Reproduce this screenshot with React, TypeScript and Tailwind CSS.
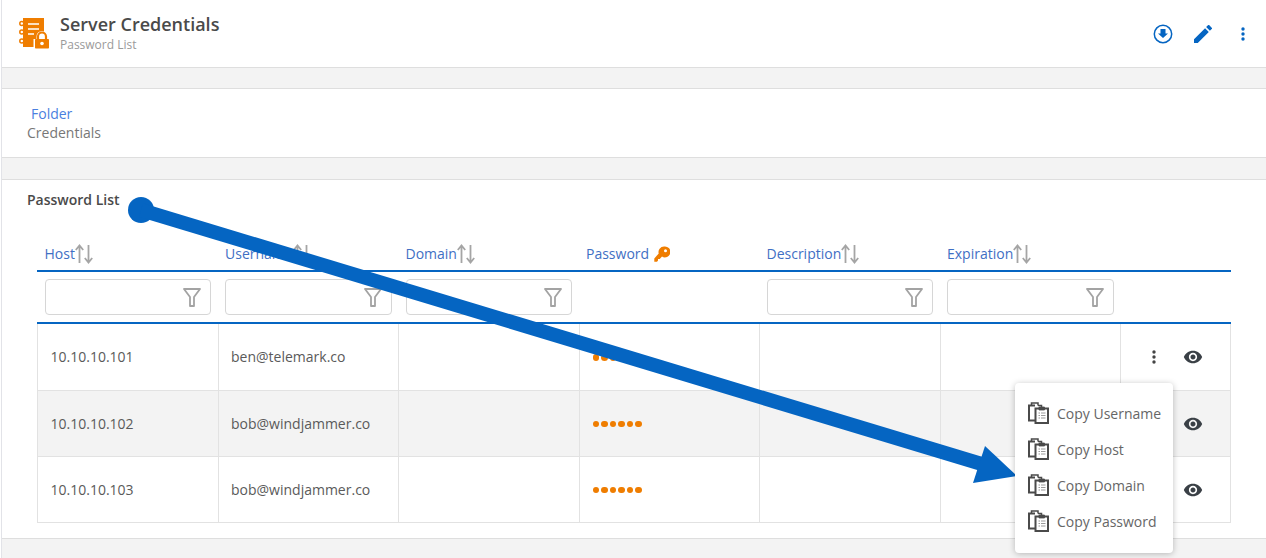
import type { ReactNode } from "react";

const rows = [
  { host: "10.10.10.101", user: "ben@telemark.co" },
  { host: "10.10.10.102", user: "bob@windjammer.co" },
  { host: "10.10.10.103", user: "bob@windjammer.co" },
];

const menuItems = ["Copy Username", "Copy Host", "Copy Domain", "Copy Password"];

const SortArrows = () => (
  <svg width="19" height="20" viewBox="0 0 19 20" fill="none" stroke="#a5a5a5" strokeWidth="1.8" className="shrink-0">
    <path d="M4.500 19V2M0.800 6l3.700-4.500 3.700 4.500" />
    <path d="M13.500 1v17M9.800 14l3.700 4.500 3.700-4.500" />
  </svg>
);

const FunnelIcon = () => (
  <svg width="18" height="19" viewBox="0 0 18 19" fill="none" stroke="#a3a3a3" strokeWidth="1.8" className="shrink-0">
    <path d="M1 1h16l-6 8v9H7V9z" strokeLinejoin="round" />
  </svg>
);

const ClipboardIcon = () => (
  <svg width="21" height="22" viewBox="0 0 21 22" fill="none" stroke="#4a4a4a" className="shrink-0">
    <path d="M7 3.500H1v15h6" strokeWidth="2" />
    <path d="M3.500 3.500V1h6.500v2.500M10 3.500h3.500v3" strokeWidth="1.500" />
    <path d="M7.500 6.500h12.500v14.500H7.500z" fill="#ffffff" strokeWidth="2" />
    <path d="M11 5h5.500v3H11z" fill="#4a4a4a" strokeWidth="0.800" />
    <path d="M10.500 11h1.500M13 11h4.500M10.500 13.500h1.500M13 13.500h4.500M10.500 16h1.500M13 16h4.500" stroke="#9a9a9a" strokeWidth="1" />
  </svg>
);

const EyeIcon = () => (
  <svg width="20" height="20" viewBox="0 0 24 24" fill="#3a4046">
    <path d="M12 4.500C7 4.500 2.730 7.610 1 12c1.730 4.390 6 7.500 11 7.500s9.270-3.110 11-7.500c-1.730-4.390-6-7.500-11-7.500zM12 17c-2.760 0-5-2.240-5-5s2.240-5 5-5 5 2.240 5 5-2.240 5-5 5zm0-8c-1.660 0-3 1.340-3 3s1.340 3 3 3 3-1.340 3-3-1.340-3-3-3z" />
  </svg>
);

const DotsIcon = ({ color }: { color: string }) => (
  <svg width="4" height="14" viewBox="0 0 4 14" fill={color}>
    <circle cx="2" cy="2" r="1.700" />
    <circle cx="2" cy="7" r="1.700" />
    <circle cx="2" cy="12" r="1.700" />
  </svg>
);

const PasswordDots = () => (
  <div className="flex gap-[2px]">
    {[0, 1, 2, 3, 4, 5].map((i) => (
      <span key={i} className="w-[6.500px] h-[6.500px] rounded-full bg-[#ef7d00]" />
    ))}
  </div>
);

const HeaderCell = ({ label, sort = true, extra }: { label: string; sort?: boolean; extra?: ReactNode }) => (
  <div className="flex items-center pl-[7.500px] text-[14px] text-[#3f6fc4]">
    <span>{label}</span>
    {sort && <SortArrows />}
    {extra}
  </div>
);

const FilterBox = () => (
  <div className="flex items-center justify-end w-[166.500px] h-[36px] pr-[9px] bg-white border border-[#d6d6d6] rounded-[4px]">
    <FunnelIcon />
  </div>
);

const App = () => {
  const grid = "grid grid-cols-[180.500px_180.500px_180.500px_180.500px_180.500px_180.500px_minmax(0,1fr)]";

  return (
    <div
      className="relative w-[1266px] h-[558px] overflow-hidden bg-white pl-[1px] text-[14px] text-[#4a4a4a]"
      style={{ fontFamily: '"Open Sans", sans-serif' }}
    >
      <div className="flex flex-col h-full border-l border-[#e2e3e8] bg-[#f3f3f3]">
        {/* page header */}
        <header className="flex items-center justify-between h-[68px] shrink-0 bg-white border-b border-[#dedede] pl-[17px] pr-[21px]">
          <div className="flex items-center gap-[11px]">
            <svg width="30" height="31" viewBox="0 0 30 31" className="shrink-0">
              <path d="M4 0h21v29H4z" fill="#ef7d00" />
              <g fill="#ffffff" stroke="#ef7d00" strokeWidth="1.500">
                <circle cx="2.800" cy="5.500" r="2" />
                <circle cx="2.800" cy="14" r="2" />
                <circle cx="2.800" cy="23" r="2" />
              </g>
              <path d="M9 6h11M9 11h11M9 16h6" stroke="#ffffff" strokeWidth="1.600" />
              <path d="M14.500 31V21h3v-2.500a5.500 5.500 0 0 1 11 0V21h1.500v10z" fill="#ffffff" />
              <path d="M19 21.500v-3a4 4 0 0 1 8 0v3" fill="none" stroke="#ef7d00" strokeWidth="2.200" />
              <rect x="16" y="21" width="14" height="9.500" rx="0.800" fill="#ef7d00" />
              <circle cx="23" cy="25.500" r="1.800" fill="#ffffff" />
            </svg>
            <div className="flex flex-col mb-[3px]">
              <div className="text-[18px] leading-[24px] font-semibold text-[#4a4a4a]">Server Credentials</div>
              <div className="mt-[1px] text-[12px] leading-[16px] text-[#9a9a9a]">Password List</div>
            </div>
          </div>
          <div className="flex items-center gap-[21px]">
            <svg width="20" height="20" viewBox="0 0 20 20" className="shrink-0">
              <circle cx="10" cy="10" r="8.700" fill="none" stroke="#0565c2" strokeWidth="1.500" />
              <path d="M7.500 5h5v4.500H15L10 14 5 9.500h2.500z" fill="#0565c2" />
            </svg>
            <svg width="18" height="18" viewBox="3 3 18 18" fill="#0565c2" className="shrink-0">
              <path d="M3 17.250V21h3.750L17.810 9.940l-3.750-3.750L3 17.250zM20.710 7.040a1 1 0 0 0 0-1.410l-2.340-2.340a1 1 0 0 0-1.410 0l-1.830 1.830 3.750 3.750 1.830-1.830z" />
            </svg>
            <span className="ml-[8px]">
              <DotsIcon color="#0565c2" />
            </span>
          </div>
        </header>

        <div className="h-[20px] shrink-0" />

        {/* breadcrumb */}
        <section className="h-[70px] shrink-0 bg-white border-y border-[#dedede] pl-[25px] pt-[15px] leading-[19px]">
          <div className="pl-[4px] text-[#4a7fe0]">Folder</div>
          <div className="text-[#777777]">Credentials</div>
        </section>

        <div className="h-[21px] shrink-0" />

        {/* password list */}
        <section className="h-[360px] shrink-0 bg-white border-y border-[#dedede] pl-[25px] pt-[10px]">
          <div className="text-[14px] leading-[20px] font-semibold text-[#4a4a4a]">Password List</div>

          <div className="w-[1194px] ml-[10px] mt-[25px]">
            <div className={`${grid} h-[37px] items-center pt-[2px] border-b-2 border-[#0565c2]`}>
              <HeaderCell label="Host" />
              <HeaderCell label="Username" />
              <HeaderCell label="Domain" />
              <HeaderCell
                label="Password"
                sort={false}
                extra={
                  <svg width="16" height="16" viewBox="0 0 16 16" fill="#ef7d00" className="ml-[5px]">
                    <path d="M10 0.500a5.500 5.500 0 0 0-5.300 7L0.300 12.500v3.200h2.700l1-1.200v-1.500h1.700l2.300-2.400A5.500 5.500 0 1 0 10 0.500zm1.500 2.700a1.500 1.500 0 1 1 0 3 1.500 1.500 0 0 1 0-3z" />
                  </svg>
                }
              />
              <HeaderCell label="Description" />
              <HeaderCell label="Expiration" />
            </div>

            <div className={`${grid} h-[52px] items-center pl-[7.500px] border-b-2 border-[#0565c2]`}>
              <FilterBox />
              <FilterBox />
              <FilterBox />
              <div />
              <FilterBox />
              <FilterBox />
            </div>

            <div className="border-x border-b border-[#e2e2e2]">
              {rows.map((row, i) => (
                <div
                  key={row.host}
                  className={`${grid} h-[66px] ${i === 1 ? "bg-[#f3f3f3]" : "bg-white"} ${i > 0 ? "border-t border-[#e2e2e2]" : ""}`}
                >
                  <div className={`flex items-center pl-[12.500px] border-r border-[#e2e2e2] text-[#5a5a5a] ${i === 0 ? "pb-[1px]" : ""}`}>{row.host}</div>
                  <div className={`flex items-center pl-[12.500px] border-r border-[#e2e2e2] text-[#5a5a5a] ${i === 0 ? "pb-[1px]" : ""}`}>{row.user}</div>
                  <div className="border-r border-[#e2e2e2]" />
                  <div className="flex items-center pl-[13px] pt-[1px] border-r border-[#e2e2e2]">
                    <PasswordDots />
                  </div>
                  <div className="border-r border-[#e2e2e2]" />
                  <div className="border-r border-[#e2e2e2]" />
                  <div className="flex items-center justify-end gap-[27px] pr-[27px]">
                    <DotsIcon color="#444444" />
                    <EyeIcon />
                  </div>
                </div>
              ))}
            </div>
          </div>
        </section>

        <div className="flex-1" />
      </div>

      {/* annotation arrow */}
      <svg width="1266" height="558" viewBox="0 0 1266 558" className="absolute left-0 top-0 pointer-events-none">
        <circle cx="141" cy="210" r="13" fill="#0565c2" />
        <path d="M141 210L985 465" stroke="#0565c2" strokeWidth="14" />
        <path d="M1017 476L985 446L973 483z" fill="#0565c2" />
      </svg>

      {/* row action menu */}
      <div className="absolute left-[1015px] top-[383px] w-[158px] h-[170px] flex flex-col justify-center gap-[14px] pl-[13px] pb-[2px] bg-white rounded-[4px] shadow-[0_1px_6px_rgba(0,0,0,0.25)]">
        {menuItems.map((item) => (
          <div key={item} className="flex items-center gap-[8px] h-[22px] text-[#666666]">
            <ClipboardIcon />
            <span>{item}</span>
          </div>
        ))}
      </div>
    </div>
  );
};

export default App;
